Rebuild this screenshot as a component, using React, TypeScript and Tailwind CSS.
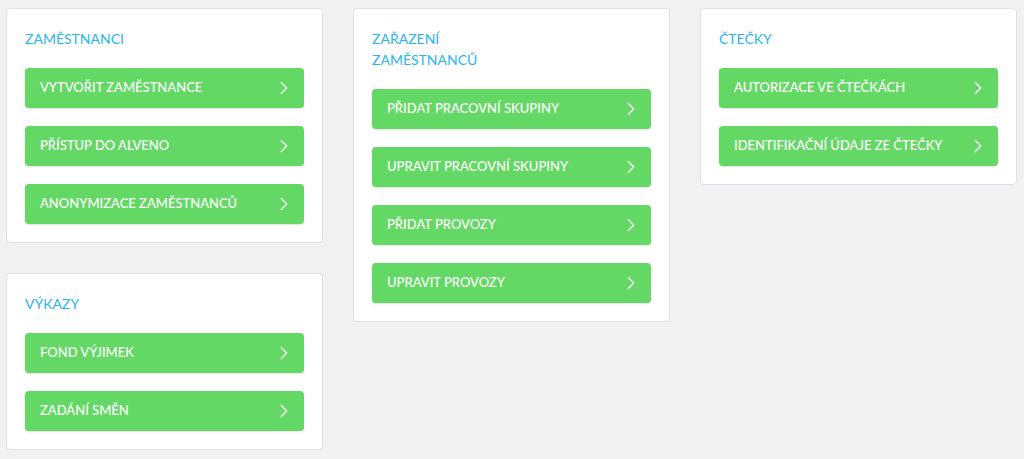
import React from 'react';
import { ChevronRight } from 'lucide-react';

interface Section {
  title: React.ReactNode;
  items: string[];
}

function LinkButton({ label }: { label: string }) {
  return (
    <button className="flex h-[40px] w-full items-center justify-between rounded-[4px] bg-[#64d865] pl-[15px] pr-[9px] text-left text-[13px] font-medium text-white shadow-[0_1px_2px_rgba(0,0,0,0.12)]">
      <span>{label}</span>
      <ChevronRight size={22} strokeWidth={1.5} />
    </button>
  );
}

function Card({ title, items }: Section) {
  return (
    <div className="rounded-[4px] border border-[#e2e2e6] bg-white px-[18px] pt-[19px] pb-[18px]">
      <h2 className="mb-[19px] text-[14px] leading-[21px] font-normal text-[#2cb5f0]">{title}</h2>
      <div className="flex flex-col gap-[18px]">
        {items.map((item) => (
          <LinkButton key={item} label={item} />
        ))}
      </div>
    </div>
  );
}

export default function App() {
  return (
    <div
      className="min-h-[459px] w-full bg-[#f1f1f3] pt-[8px] pl-[6px] pr-[7px]"
      style={{ fontFamily: 'Lato, "Open Sans", sans-serif' }}
    >
      <div className="grid grid-cols-[317px_317px_317px] items-start gap-[30px]">
        <div className="flex flex-col gap-[30px]">
          <Card
            title="ZAMĚSTNANCI"
            items={['VYTVOŘIT ZAMĚSTNANCE', 'PŘÍSTUP DO ALVENO', 'ANONYMIZACE ZAMĚSTNANCŮ']}
          />
          <Card title="VÝKAZY" items={['FOND VÝJIMEK', 'ZADÁNÍ SMĚN']} />
        </div>
        <Card
          title={
            <>
              ZAŘAZENÍ
              <br />
              ZAMĚSTNANCŮ
            </>
          }
          items={['PŘIDAT PRACOVNÍ SKUPINY', 'UPRAVIT PRACOVNÍ SKUPINY', 'PŘIDAT PROVOZY', 'UPRAVIT PROVOZY']}
        />
        <Card
          title="ČTEČKY"
          items={['AUTORIZACE VE ČTEČKÁCH', 'IDENTIFIKAČNÍ ÚDAJE ZE ČTEČKY']}
        />
      </div>
    </div>
  );
}
